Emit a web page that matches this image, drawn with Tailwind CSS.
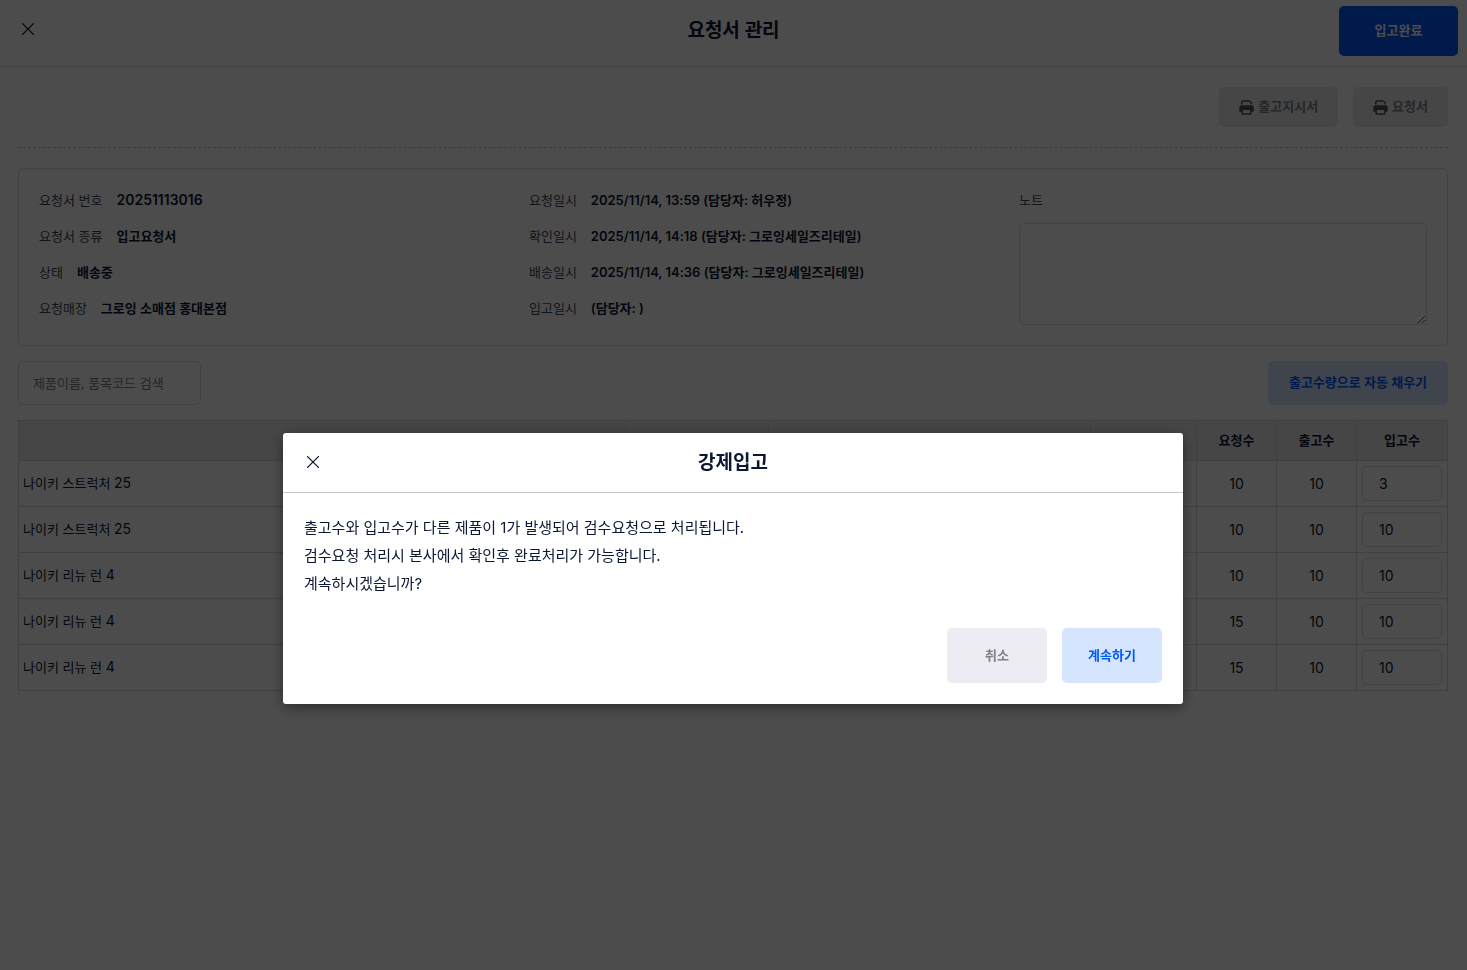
<!DOCTYPE html>
<html lang="ko">
<head>
<meta charset="utf-8">
<meta name="viewport" content="width=device-width, initial-scale=1">
<title>요청서 관리</title>
<script src="https://cdn.jsdelivr.net/npm/@tailwindcss/browser@4"></script>
</head>
<body class="min-h-screen bg-white font-[Inter,'Noto_Sans_CJK_KR',sans-serif] text-[13px] text-[#0b1733]">

<header class="grid h-[67px] grid-cols-[1fr_auto_1fr] items-center border-b border-[#e2e2e6] px-[9px] pb-1">
  <button type="button" aria-label="닫기" class="mb-1 ml-[7px] flex size-6 items-center justify-center justify-self-start">
    <svg class="size-3" viewBox="0 0 12 12" fill="none" stroke="currentColor" stroke-width="1.3" stroke-linecap="round"><path d="M.6.6l10.8 10.8M11.4.6L.6 11.4"/></svg>
  </button>
  <h1 class="text-[19px] leading-[30px] font-semibold">요청서 관리</h1>
  <button type="button" class="h-[50px] w-[119px] justify-self-end rounded-[5px] bg-[#0058ff] font-semibold text-white">입고완료</button>
</header>

<main class="pt-5 pr-[19px] pl-[18px]">
  <div class="flex justify-end gap-[15px] border-b border-dashed border-[#c8c8cc] pb-5">
    <button type="button" class="flex h-10 items-center gap-1 rounded-[5px] bg-[#ebebec] px-5 font-semibold text-[#7b828e]">
      <svg class="size-[15px] text-[#4e5663]" viewBox="0 0 15 15" fill="none" stroke="currentColor" stroke-width="1.5" stroke-linejoin="round"><path d="M2.8 4.5V1.9a.9.9 0 0 1 .9-.9h6.8l1.7 1.7v1.8"/><path d="M3.2 11H1V7.4A1.4 1.4 0 0 1 2.4 6h10.2A1.4 1.4 0 0 1 14 7.4V11h-2.2V9H3.2z" fill="currentColor"/><path d="M3.2 9.2h8.6V14H3.2z" fill="#ebebec"/></svg>
      출고지시서
    </button>
    <button type="button" class="flex h-10 items-center gap-1 rounded-[5px] bg-[#ebebec] px-5 font-semibold text-[#7b828e]">
      <svg class="size-[15px] text-[#4e5663]" viewBox="0 0 15 15" fill="none" stroke="currentColor" stroke-width="1.5" stroke-linejoin="round"><path d="M2.8 4.5V1.9a.9.9 0 0 1 .9-.9h6.8l1.7 1.7v1.8"/><path d="M3.2 11H1V7.4A1.4 1.4 0 0 1 2.4 6h10.2A1.4 1.4 0 0 1 14 7.4V11h-2.2V9H3.2z" fill="currentColor"/><path d="M3.2 9.2h8.6V14H3.2z" fill="#ebebec"/></svg>
      요청서
    </button>
  </div>

  <section class="mt-5 grid grid-cols-3 gap-x-[82px] rounded-[5px] border border-[#dcdce0] p-5 leading-[22px]">
    <dl class="flex flex-col gap-[14px]">
      <div class="flex gap-[14px]"><dt class="text-[#3c4658]">요청서 번호</dt><dd class="text-sm leading-[22px] font-semibold">20251113016</dd></div>
      <div class="flex gap-[14px]"><dt class="text-[#3c4658]">요청서 종류</dt><dd class="font-semibold">입고요청서</dd></div>
      <div class="flex gap-[14px]"><dt class="text-[#3c4658]">상태</dt><dd class="font-semibold">배송중</dd></div>
      <div class="flex gap-[14px]"><dt class="text-[#3c4658]">요청매장</dt><dd class="font-semibold">그로잉 소매점 홍대본점</dd></div>
    </dl>
    <dl class="flex flex-col gap-[14px] whitespace-nowrap">
      <div class="flex gap-[14px]"><dt class="text-[#3c4658]">요청일시</dt><dd class="font-semibold">2025/11/14, 13:59 (담당자: 허우정)</dd></div>
      <div class="flex gap-[14px]"><dt class="text-[#3c4658]">확인일시</dt><dd class="font-semibold">2025/11/14, 14:18 (담당자: 그로잉세일즈리테일)</dd></div>
      <div class="flex gap-[14px]"><dt class="text-[#3c4658]">배송일시</dt><dd class="font-semibold">2025/11/14, 14:36 (담당자: 그로잉세일즈리테일)</dd></div>
      <div class="flex gap-[14px]"><dt class="text-[#3c4658]">입고일시</dt><dd class="font-semibold">(담당자: )</dd></div>
    </dl>
    <div class="flex flex-col gap-3">
      <label for="note" class="text-[#3c4658]">노트</label>
      <textarea id="note" class="h-[102px] w-full rounded-[5px] border border-[#dcdce0] p-3"></textarea>
    </div>
  </section>

  <div class="mt-[15px] flex items-center justify-between">
    <input type="search" aria-label="제품이름, 품목코드 검색" placeholder="제품이름, 품목코드 검색" class="h-11 w-[183px] rounded-[5px] border border-[#dcdce0] px-[14px] placeholder:text-[#7d7d80]">
    <button type="button" class="h-11 min-w-[180px] rounded-[5px] bg-[#d5e5ff] px-5 font-semibold text-[#0058ff]">출고수량으로 자동 채우기</button>
  </div>

  <table class="mt-[15px] w-full table-fixed border-collapse text-center [&_td]:border [&_td]:border-[#d8d8dc] [&_th]:border [&_th]:border-[#d8d8dc]">
    <colgroup><col><col class="w-[143px]"><col class="w-[322px]"><col class="w-[106px]"><col class="w-20"><col class="w-20"><col class="w-[91px]"></colgroup>
    <thead>
      <tr class="h-10 bg-[#ebebeb]"><th></th><th></th><th></th><th></th><th class="font-semibold">요청수</th><th class="font-semibold">출고수</th><th class="font-semibold">입고수</th></tr>
    </thead>
    <tbody>
      <tr class="h-[46px]"><td class="px-1 text-left">나이키 스트럭처 <span class="text-sm">25</span></td><td></td><td></td><td></td><td class="text-sm">10</td><td class="text-sm">10</td><td><input aria-label="입고수 1" value="3" class="mx-auto block h-[35px] w-20 rounded-[5px] border border-[#dcdce0] px-4 text-sm"></td></tr>
      <tr class="h-[46px]"><td class="px-1 text-left">나이키 스트럭처 <span class="text-sm">25</span></td><td></td><td></td><td></td><td class="text-sm">10</td><td class="text-sm">10</td><td><input aria-label="입고수 2" value="10" class="mx-auto block h-[35px] w-20 rounded-[5px] border border-[#dcdce0] px-4 text-sm"></td></tr>
      <tr class="h-[46px]"><td class="px-1 text-left">나이키 리뉴 런 <span class="text-sm">4</span></td><td></td><td></td><td></td><td class="text-sm">10</td><td class="text-sm">10</td><td><input aria-label="입고수 3" value="10" class="mx-auto block h-[35px] w-20 rounded-[5px] border border-[#dcdce0] px-4 text-sm"></td></tr>
      <tr class="h-[46px]"><td class="px-1 text-left">나이키 리뉴 런 <span class="text-sm">4</span></td><td></td><td></td><td></td><td class="text-sm">15</td><td class="text-sm">10</td><td><input aria-label="입고수 4" value="10" class="mx-auto block h-[35px] w-20 rounded-[5px] border border-[#dcdce0] px-4 text-sm"></td></tr>
      <tr class="h-[46px]"><td class="px-1 text-left">나이키 리뉴 런 <span class="text-sm">4</span></td><td></td><td></td><td></td><td class="text-sm">15</td><td class="text-sm">10</td><td><input aria-label="입고수 5" value="10" class="mx-auto block h-[35px] w-20 rounded-[5px] border border-[#dcdce0] px-4 text-sm"></td></tr>
    </tbody>
  </table>
</main>

<div class="fixed inset-0 flex items-start justify-center bg-black/70 pt-[433px] pr-px">
  <section role="dialog" aria-modal="true" aria-labelledby="dialog-title" class="w-[900px] max-w-full rounded-[3px] bg-white shadow-[0_3px_14px_rgba(0,0,0,0.45)]">
    <div class="grid h-[60px] grid-cols-[1fr_auto_1fr] items-center border-b border-[#c8c8d0] px-[18px]">
      <button type="button" aria-label="닫기" class="mb-0.5 flex size-6 items-center justify-center">
        <svg class="size-3" viewBox="0 0 12 12" fill="none" stroke="currentColor" stroke-width="1.3" stroke-linecap="round"><path d="M.6.6l10.8 10.8M11.4.6L.6 11.4"/></svg>
      </button>
      <h2 id="dialog-title" class="text-[19px] leading-[30px] font-semibold">강제입고</h2>
    </div>
    <div class="p-[21px]">
      <p class="text-[15px] leading-7">출고수와 입고수가 다른 제품이 1가 발생되어 검수요청으로 처리됩니다.<br>검수요청 처리시 본사에서 확인후 완료처리가 가능합니다.<br>계속하시겠습니까?</p>
      <div class="mt-[30px] flex justify-end gap-[15px]">
        <button type="button" class="h-[55px] w-[100px] rounded-[5px] bg-[#ececf2] font-semibold text-[#7b828e]">취소</button>
        <button type="button" class="h-[55px] w-[100px] rounded-[5px] bg-[#d5e5ff] font-semibold text-[#0058ff]">계속하기</button>
      </div>
    </div>
  </section>
</div>
</body>
</html>
